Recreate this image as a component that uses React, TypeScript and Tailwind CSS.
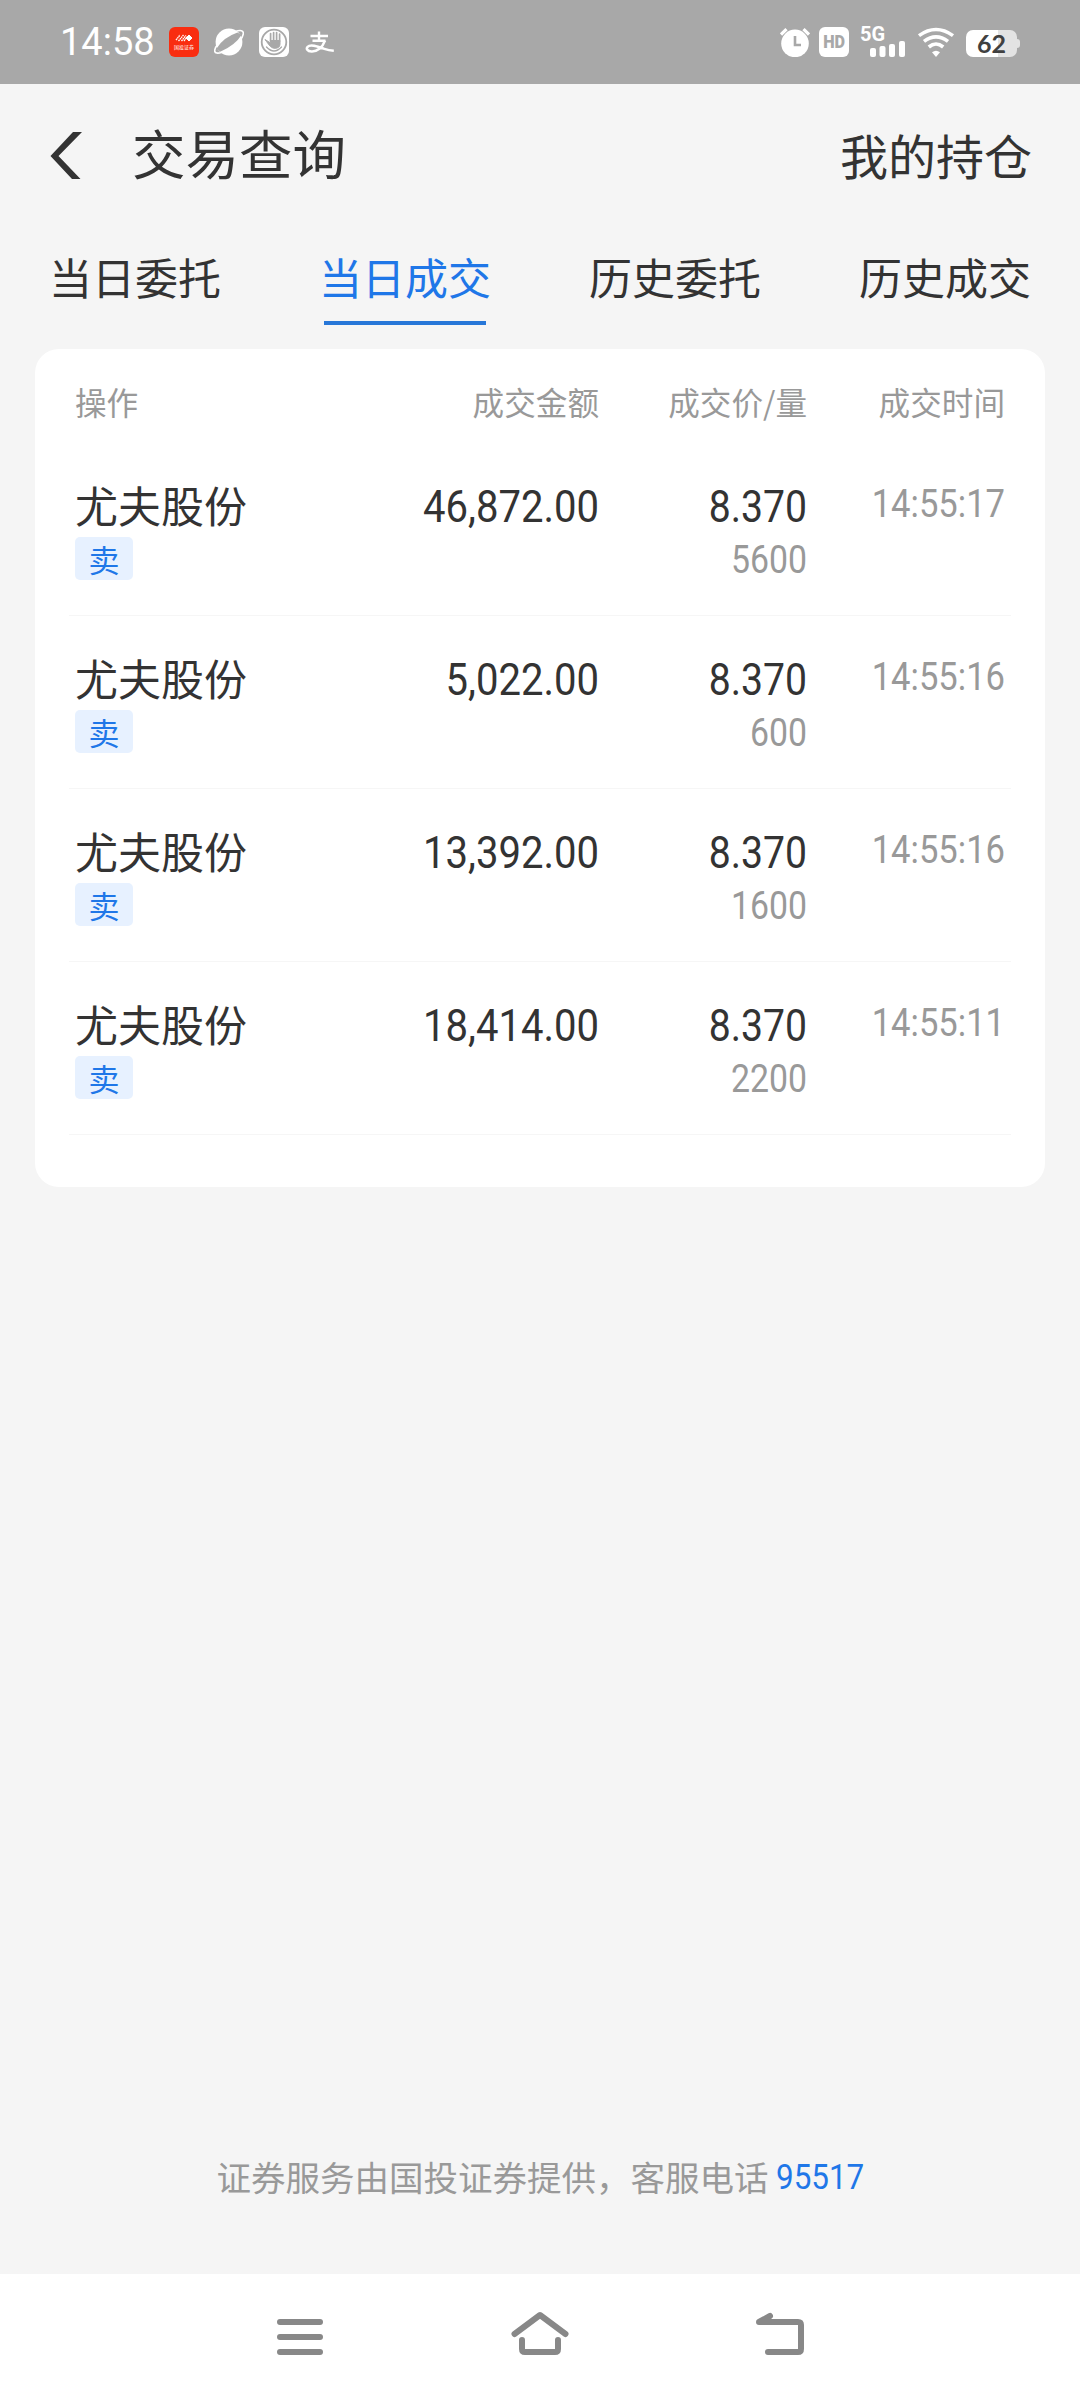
import React from "react";

const tabs = [
    { id: 1, label: "当日委托" },
    { id: 2, label: "当日成交" },
    { id: 3, label: "历史委托" },
    { id: 4, label: "历史成交" },
];

const deals = [
    { id: 1, name: "尤夫股份", side: "卖", amount: "46,872.00", price: "8.370", volume: "5600", time: "14:55:17" },
    { id: 2, name: "尤夫股份", side: "卖", amount: "5,022.00", price: "8.370", volume: "600", time: "14:55:16" },
    { id: 3, name: "尤夫股份", side: "卖", amount: "13,392.00", price: "8.370", volume: "1600", time: "14:55:16" },
    { id: 4, name: "尤夫股份", side: "卖", amount: "18,414.00", price: "8.370", volume: "2200", time: "14:55:11" },
];

const StatusBar = () => (
    <div className="h-[84px] bg-[#a8a8a8] flex items-center justify-between pl-[60px] pr-[60px] text-white shrink-0">
        <div className="flex items-center h-full">
            <span className="w-[109px] text-[38px] leading-[84px] font-['Roboto']">14:58</span>

            {/* Broker app */}
            <div className="w-[30px] h-[30px] rounded-[6px] bg-[#f92d10] flex flex-col items-center pt-[7px]">
                <svg className="w-[18px] h-[8px] shrink-0" viewBox="0 0 18 8" fill="none" stroke="white">
                    <path d="M1 6L5 1M3.5 7L8.5 1M6.5 7L11 1.5M9 7L12 3" strokeWidth="1.3" strokeDasharray="1.6 0.5" />
                    <path d="M14 1L17 4L14 7L11 4Z" fill="white" strokeWidth="1" />
                </svg>
                <span className="text-[5px] leading-[8px] mt-px whitespace-nowrap font-['Noto_Sans_CJK_SC']">国投证券</span>
            </div>

            {/* Planet */}
            <svg className="w-[30px] h-[30px] ml-[15px]" viewBox="0 0 30 30">
                <circle cx="15" cy="15" r="13.4" fill="white" />
                <path d="M2.6 21.5Q9 10.5 23.5 5.5L27.5 8Q21.5 18 6.2 24.8Z" fill="#a8a8a8" />
                <path
                    d="M21.5 4.6C26 2.8 29.8 3.2 29.3 6.8C28.9 9.3 27.6 11.4 26 13.4M3.6 17.6C1.8 19.8 0.7 21.8 0.7 23.6C0.6 26.6 4 26.6 8 25.2"
                    fill="none"
                    stroke="white"
                    strokeWidth="1.6"
                />
            </svg>

            {/* Hand badge */}
            <svg className="w-[30px] h-[30px] ml-[15px]" viewBox="0 0 30 30" fill="none" stroke="#a8a8a8" strokeLinecap="round">
                <rect width="30" height="30" rx="6" fill="white" stroke="none" />
                <circle cx="15" cy="15" r="12.3" strokeWidth="1.8" />
                <path d="M11.6 14V6.5M14.6 14V5.5M17.6 14V5.5M20.6 14V7" strokeWidth="1.7" />
                <path d="M11.6 13.5H21V17C21 20 19 21.3 16 21.3C12 21.3 10.5 18.5 6 12.5L11.6 16Z" fill="#a8a8a8" strokeWidth="1" />
                <path d="M7.5 20Q15 28 22.5 20" strokeWidth="1.3" />
            </svg>

            {/* Alipay mark */}
            <svg className="w-[30px] h-[24px] ml-[16px]" viewBox="0 0 30 24" fill="none" stroke="white">
                <path d="M14 1.5V11.5M5.5 6H23M7.5 10.8H20.5" strokeWidth="2.4" />
                <path d="M20 10.6C17.5 17.5 12 21.8 6.5 21.5C2.2 21.3 0.9 18.6 2.6 16.8C5.5 13.8 12.5 16.4 18.5 18.6C22 19.8 25.5 20.6 28.8 20.8" strokeWidth="2.5" />
            </svg>
        </div>

        <div className="flex items-center">
            {/* Alarm */}
            <svg className="w-[30px] h-[30px]" viewBox="0 0 30 30">
                <circle cx="15" cy="16.4" r="13.8" fill="white" />
                <path d="M1 7.5L6.5 2.2M29 7.5L23.5 2.2" stroke="white" strokeWidth="3.2" />
                <path d="M15 9V18H21" fill="none" stroke="#a8a8a8" strokeWidth="2.6" />
            </svg>

            {/* HD */}
            <div className="w-[30px] h-[30px] ml-[9px] rounded-[6px] bg-white text-[#a8a8a8] flex items-center justify-center">
                <span className="font-['Roboto'] font-black text-[18px] leading-none scale-x-[0.9]">HD</span>
            </div>

            {/* Network */}
            <div className="w-[44px] h-[30px] ml-[12px] relative">
                <span className="absolute -left-px -top-[2px] font-['Roboto'] font-bold text-[20px] leading-[18px]">5G</span>
                <svg className="absolute inset-0" viewBox="0 0 44 30" fill="white">
                    <rect x="9" y="21" width="6" height="9" rx="2" />
                    <rect x="18.5" y="19" width="6" height="11" rx="2" />
                    <rect x="28" y="17" width="6" height="13" rx="2" />
                    <rect x="38" y="14" width="6" height="16" rx="2" />
                </svg>
            </div>

            {/* Wifi */}
            <svg className="w-[38px] h-[30px] ml-[12px]" viewBox="0 0 38 30" fill="none" stroke="white" strokeWidth="3.6">
                <path d="M2 8.6Q19 -3.6 36 8.6" />
                <path d="M7 14.4Q19 5.4 31 14.4" />
                <path d="M11.8 20Q19 14 26.2 20" />
                <path d="M15 25.2Q19 22.2 23 25.2L19 30Z" fill="white" stroke="none" />
            </svg>

            {/* Battery */}
            <div className="flex items-center ml-[11px] mt-[3px]">
                <div className="w-[51px] h-[27px] rounded-[7px] bg-[linear-gradient(90deg,#fff_62%,#e3e3e3_62%)] flex items-center justify-center">
                    <span className="font-['Lato'] font-bold text-[25px] leading-none text-[#404040]">62</span>
                </div>
                <div className="w-[3px] h-[9px] rounded-r-[3px] bg-[#e3e3e3]" />
            </div>
        </div>
    </div>
);

const App = () => {
    return (
        <div className="w-[1080px] h-[2400px] bg-[#f5f5f5] flex flex-col overflow-hidden font-['Noto_Sans_CJK_SC',sans-serif] text-[#333]">
            <StatusBar />

            {/* Title bar */}
            <header className="h-[142px] flex items-center pl-[50px] pr-[48px] shrink-0">
                <svg className="w-[32px] h-[48px]" viewBox="0 0 32 48" fill="#333">
                    <path d="M23 1H32L8.5 25L30.5 48H22L0.5 25Z" />
                </svg>
                <h1 className="ml-[50px] text-[53.5px] leading-[80px] -mt-[6px]">交易查询</h1>
                <a className="ml-auto text-[48px] leading-[70px] -mt-[2px]">我的持仓</a>
            </header>

            {/* Tabs */}
            <nav className="h-[123px] grid grid-cols-4 shrink-0">
                {tabs.map((tab) => (
                    <div key={tab.id} className="flex flex-col items-center pt-[20px]">
                        <span className={`text-[43px] leading-[60px] ${tab.id === 2 ? "text-[#1f77e8]" : ""}`}>{tab.label}</span>
                        {tab.id === 2 && <div className="w-[162px] h-[4px] mt-[15px] bg-[#2777d8]" />}
                    </div>
                ))}
            </nav>

            {/* Deal list */}
            <section className="mx-[35px] h-[838px] rounded-[24px] bg-white shrink-0">
                <div className="h-[94px] px-[40px] pt-[28px] grid grid-cols-[240px_284px_208px_198px] text-[31.6px] leading-[48px] text-[#999]">
                    <span>操作</span>
                    <span className="text-right">成交金额</span>
                    <span className="text-right">成交价/量</span>
                    <span className="text-right">成交时间</span>
                </div>

                {deals.map((deal) => (
                    <div
                        key={deal.id}
                        className="h-[173px] mx-[34px] px-[6px] border-b border-[#f6f6f6] grid grid-cols-[240px_284px_208px_198px] text-right"
                    >
                        <div className="pt-[31px] text-left">
                            <p className="text-[43px] leading-[60px]">{deal.name}</p>
                            <div className="mt-[3px] w-[58px] h-[43px] rounded-[5px] bg-[#e7f1ff] text-[#1f77e8] text-[31px] leading-[43px] text-center">
                                {deal.side}
                            </div>
                        </div>
                        <p className="pt-[34px] font-['Roboto'] text-[44px] leading-[60px] origin-right scale-x-[0.91]">{deal.amount}</p>
                        <div className="pt-[34px] font-['Roboto'] origin-right scale-x-[0.89]">
                            <p className="text-[44px] leading-[60px]">{deal.price}</p>
                            <p className="text-[38px] leading-[46px] text-[#999]">{deal.volume}</p>
                        </div>
                        <p className="pt-[31px] font-['Roboto'] text-[38px] leading-[60px] text-[#999] origin-right scale-x-[0.91]">{deal.time}</p>
                    </div>
                ))}
            </section>

            <footer className="mt-auto mb-[71px] flex justify-center items-center text-[34.5px] leading-[52px] text-[#999]">
                <span className="-mt-[2px]">证券服务由国投证券提供，客服电话</span>
                <a className="ml-[7px] w-[88px] font-['Roboto'] text-[#1f77e8] origin-left scale-x-[0.91]">95517</a>
            </footer>

            {/* System navigation */}
            <div className="h-[126px] bg-white flex justify-center items-start gap-[180px] pt-[31px] shrink-0">
                <svg className="w-[60px] h-[56px]" viewBox="0 0 60 56" fill="#888">
                    <rect x="7" y="14" width="46" height="6" rx="3" />
                    <rect x="7" y="29" width="46" height="6" rx="3" />
                    <rect x="7" y="44" width="46" height="6" rx="3" />
                </svg>
                <svg className="w-[60px] h-[56px]" viewBox="0 0 60 56" fill="none" stroke="#888" strokeWidth="6" strokeLinecap="round" strokeLinejoin="round">
                    <path d="M4.5 29L30 10L55.5 29" />
                    <path d="M12 35V44Q12 47 15 47H45Q48 47 48 44V35" />
                </svg>
                <svg className="w-[60px] h-[56px]" viewBox="0 0 60 56" fill="none" stroke="#888" strokeWidth="6" strokeLinecap="round" strokeLinejoin="round">
                    <path d="M18 47H48Q51 47 51 44V20Q51 17 48 17H9L20 11" />
                </svg>
            </div>
        </div>
    );
};

export default App;
